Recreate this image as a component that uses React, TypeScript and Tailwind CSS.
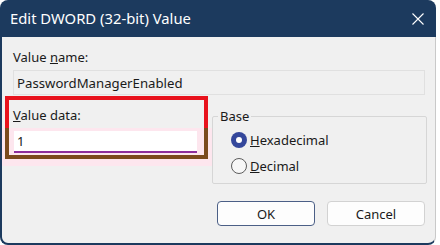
export default function App() {
  return (
    <div className="w-[440px] h-[245px] bg-white font-['Noto_Sans',sans-serif] text-[#1a1a1a]">
      <div className="w-[436px] h-[245px] flex flex-col">
        {/* title bar */}
        <div className="h-[37px] shrink-0 bg-[#1c3a5e] rounded-t-[8px] flex items-center justify-between pl-[10px] pr-[12px] text-white">
          <span className="text-[14.8px] leading-none">Edit DWORD (32-bit) Value</span>
          <svg width="12" height="12" viewBox="0 0 12 12" className="mt-[1px]">
            <path d="M0.5 0.5 L11.5 11.5 M11.5 0.5 L0.5 11.5" stroke="#ffffff" strokeWidth="1.1" />
          </svg>
        </div>

        {/* body */}
        <div className="flex-1 flex flex-col bg-[#f0f0f0] border-l-2 border-b-2 border-r border-[#1c3a5e] border-r-[#c9c9c9] rounded-b-[8px] text-[13px] leading-[18px]">
          <div className="mt-[11px] pl-[11px]">
            Value <span className="underline">n</span>ame:
          </div>
          <div className="mt-[4px] ml-[11px] w-[412px] h-[25px] border border-[#e0e0e0] flex items-center pl-[3px] text-[13.2px]">
            PasswordManagerEnabled
          </div>

          <div className="mt-[1px] flex items-start">
            {/* highlighted "Value data" block */}
            <div className="pl-[3px] pr-[4px] h-[70px] bg-[linear-gradient(to_bottom,transparent_32px,#fde6ee_32px)]">
              <div className="w-[203px] h-[63px] p-[4px] bg-[linear-gradient(to_bottom,#e8121c_51%,#7b4a1d_51%)]">
                <div className="h-full bg-[linear-gradient(to_bottom,#f0f0f0_28px,#fde6ee_28px)] pt-[6px] pl-[4px]">
                  <div>
                    <span className="underline">V</span>alue data:
                  </div>
                  <div className="mt-[7px] ml-[1px] w-[183px] h-[22px] bg-white border-b-2 border-[#8e2d9c] flex items-center pl-[3px]">
                    1
                  </div>
                </div>
              </div>
            </div>

            {/* Base group */}
            <fieldset className="mt-[11px] w-[215px] border border-[#d6d6d6] rounded-[2px] p-0 pb-[8px] pl-[18px]">
              <legend className="ml-[-13px] px-[2px]">Base</legend>
              <div className="mt-[6px] flex items-center h-[18px]">
                <span className="w-[16px] h-[16px] rounded-full bg-[#34479b] flex items-center justify-center">
                  <span className="w-[6px] h-[6px] rounded-full bg-white" />
                </span>
                <span className="ml-[3px]">
                  <span className="underline">H</span>exadecimal
                </span>
              </div>
              <div className="mt-[8px] flex items-center h-[18px]">
                <span className="w-[16px] h-[16px] rounded-full border border-[#5c5c5c] bg-[#f7f7f7]" />
                <span className="ml-[3px]">
                  <span className="underline">D</span>ecimal
                </span>
              </div>
            </fieldset>
          </div>

          {/* buttons */}
          <div className="mt-[17px] flex justify-end gap-[12px] pr-[10px]">
            <button className="w-[98px] h-[25px] rounded-[4px] bg-[#fdfdfd] border border-[#4b5f86] text-[13px]">
              OK
            </button>
            <button className="w-[98px] h-[25px] rounded-[4px] bg-[#fdfdfd] border border-[#d2d2d2] text-[13px]">
              Cancel
            </button>
          </div>
        </div>
      </div>
    </div>
  )
}
